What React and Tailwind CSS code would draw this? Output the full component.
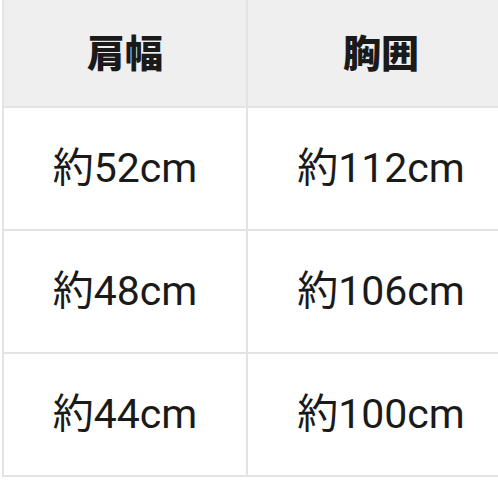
const HEAD = ['肩幅', '胸囲'];
const ROWS = [
  ['約52cm', '約112cm'],
  ['約48cm', '約106cm'],
  ['約44cm', '約100cm'],
];

export default function App() {
  return (
    <div className="w-[498px] h-[498px] overflow-hidden bg-white pl-[2px]" style={{ fontFamily: 'Roboto, "Noto Sans CJK JP", sans-serif' }}>
      <div className="w-[520px] border-l-2 border-[#e3e3e3]">
        <div className="grid grid-cols-[244px_266px] h-[108px] bg-[#efefef] border-b-2 border-[#e3e3e3]">
          {HEAD.map((h, i) => (
            <div key={h} className={`flex items-center justify-center pb-[6px] text-[38px] font-black text-[#1a1a1a] ${i === 0 ? 'border-r-2 border-[#e3e3e3]' : ''}`} style={{ fontFamily: '"Noto Sans CJK JP", sans-serif' }}>{h}</div>
          ))}
        </div>
        {ROWS.map((r, ri) => (
          <div key={ri} className="grid grid-cols-[244px_266px] h-[123px] border-b-2 border-[#e3e3e3]">
            {r.map((c, i) => (
              <div key={i} className={`flex items-center justify-center text-[41px] text-[#1a1a1a] ${i === 0 ? 'border-r-2 border-[#e3e3e3]' : ''}`}>{c}</div>
            ))}
          </div>
        ))}
      </div>
    </div>
  );
}
